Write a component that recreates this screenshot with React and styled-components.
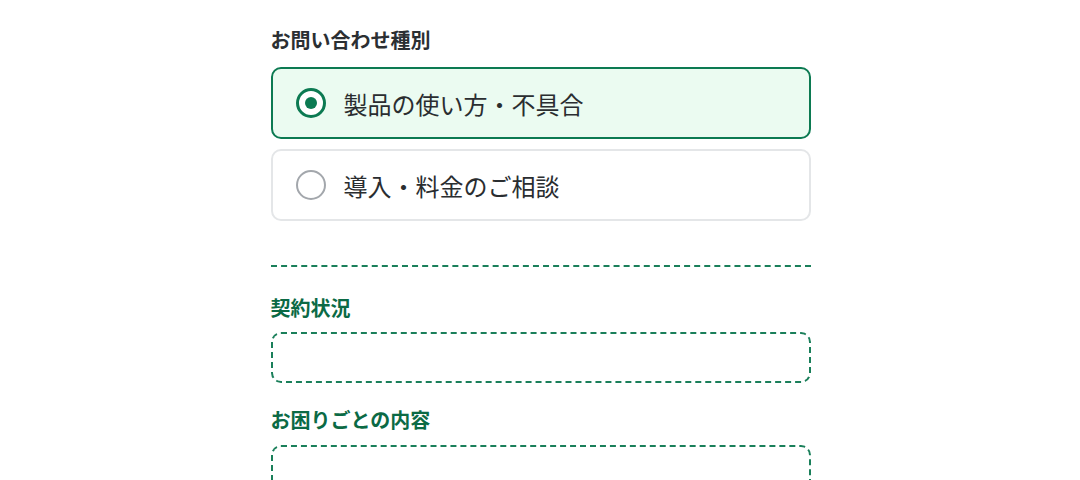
import styled, { createGlobalStyle } from "styled-components";

const GlobalStyle = createGlobalStyle`
  body {
    margin: 0;
    background: #fff;
    font-family: "Noto Sans CJK JP", "Noto Sans", sans-serif;
  }
`;

const Wrapper = styled.div`
  width: 540px;
  margin: 0 auto;
  padding: 26px 0 0 1px;
  box-sizing: content-box;
`;

const Label = styled.div`
  font-size: 20px;
  font-weight: 700;
  line-height: 28px;
  color: ${(p) => (p.$green ? "#0b6a45" : "#2b2f33")};
  margin-bottom: ${(p) => p.$mb || 13}px;
  margin-top: ${(p) => p.$mt || 0}px;
`;

const Options = styled.div`
  display: flex;
  flex-direction: column;
  gap: 10px;
`;

const Option = styled.label`
  height: 72px;
  box-sizing: border-box;
  display: flex;
  align-items: center;
  gap: 18px;
  padding-left: 23px;
  border-radius: 10px;
  border: 2px solid ${(p) => (p.$checked ? "#0c7a52" : "#e4e6e8")};
  background: ${(p) => (p.$checked ? "#ebfbf1" : "#fff")};
  font-size: 24px;
  font-weight: 400;
  color: #2a2d30;
  cursor: pointer;
`;

const Radio = styled.span`
  width: 30px;
  height: 30px;
  box-sizing: border-box;
  border-radius: 50%;
  border: ${(p) => (p.$checked ? "3px solid #0c7a52" : "2px solid #a3a7ac")};
  display: flex;
  align-items: center;
  justify-content: center;
  background: #fff;
  flex-shrink: 0;
  &::after {
    content: "";
    display: ${(p) => (p.$checked ? "block" : "none")};
    width: 12px;
    height: 12px;
    border-radius: 50%;
    background: #0c7a52;
  }
`;

const Divider = styled.hr`
  border: 0;
  border-top: 2px dashed #1a7f5a;
  margin: 44px 0 27px;
`;

const DashedBox = styled.div`
  height: ${(p) => p.$h || 51}px;
  box-sizing: border-box;
  border: 2px dashed #1a7f5a;
  border-radius: 10px;
`;

const options = ["製品の使い方・不具合", "導入・料金のご相談"];

function App() {
  return (
    <>
      <GlobalStyle />
      <Wrapper>
        <Label>お問い合わせ種別</Label>
        <Options>
          {options.map((o, i) => (
            <Option key={o} $checked={i === 0}>
              <Radio $checked={i === 0} />
              {o}
            </Option>
          ))}
        </Options>
        <Divider />
        <Label $green $mb={10}>契約状況</Label>
        <DashedBox />
        <Label $green $mt={23} $mb={11}>お困りごとの内容</Label>
        <DashedBox $h={80} />
      </Wrapper>
    </>
  );
}

export default App;
